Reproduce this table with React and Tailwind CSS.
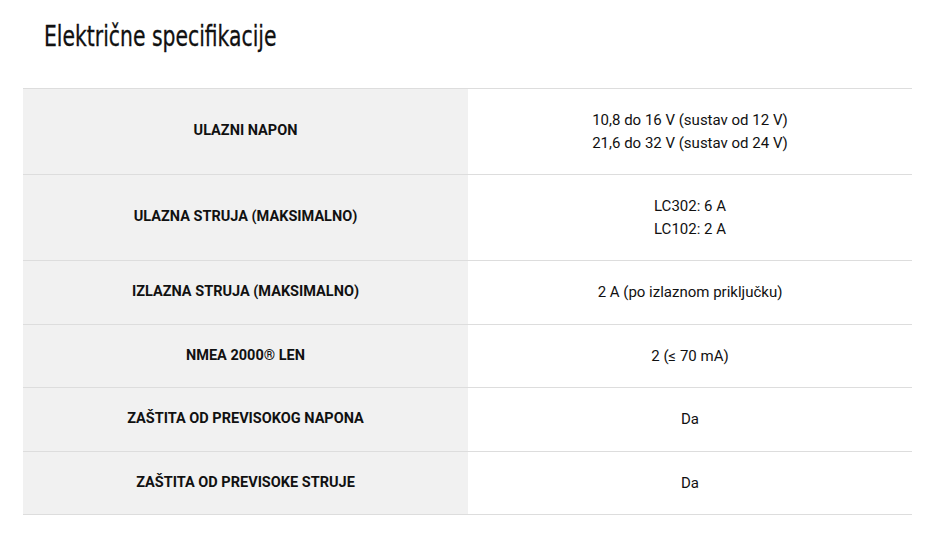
export default function App() {
  const rows = [
    ["ULAZNI NAPON", ["10,8 do 16 V (sustav od 12 V)", "21,6 do 32 V (sustav od 24 V)"]],
    ["ULAZNA STRUJA (MAKSIMALNO)", ["LC302: 6 A", "LC102: 2 A"]],
    ["IZLAZNA STRUJA (MAKSIMALNO)", ["2 A (po izlaznom priključku)"]],
    ["NMEA 2000® LEN", ["2 (≤ 70 mA)"]],
    ["ZAŠTITA OD PREVISOKOG NAPONA", ["Da"]],
    ["ZAŠTITA OD PREVISOKE STRUJE", ["Da"]],
  ];
  return (
    <div className="w-[938px] h-[547px] bg-white pl-[23px] pr-[26px]" style={{ fontFamily: "Roboto, 'Liberation Sans', sans-serif" }}>
      <div className="pl-[21px] pt-[18px] h-[88px]">
        <h2
          className="inline-block origin-left scale-x-[0.78] text-[29px] leading-[36px] text-[#111] whitespace-nowrap [-webkit-text-stroke:0.3px_#111]"
          style={{ fontFamily: "'DejaVu Sans Condensed', 'DejaVu Sans', sans-serif", fontStretch: "condensed" }}
        >
          Električne specifikacije
        </h2>
      </div>
      <div className="border-t border-[#dddddd]">
        {rows.map(([label, vals]) => (
          <div key={label} className="grid grid-cols-[445px_1fr] border-b border-[#dddddd] leading-[22.5px] text-[#111]">
            <div className="bg-[#f1f1f1] flex items-center justify-center font-bold py-5 text-[14.5px]">{label}</div>
            <div className="flex flex-col items-center justify-center py-5 text-[15px]">
              {vals.map((v) => (
                <div key={v}>{v}</div>
              ))}
            </div>
          </div>
        ))}
      </div>
    </div>
  );
}
